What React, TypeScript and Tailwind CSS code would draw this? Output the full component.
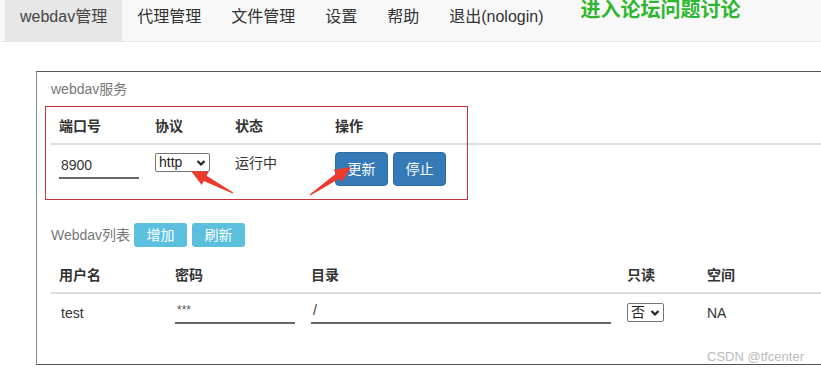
import React from 'react';

const font = "font-['Liberation_Sans','Noto_Sans_CJK_SC',sans-serif]";

// builds a tapered arrow polygon from tail to tip
function arrowPoints(x1: number, y1: number, x2: number, y2: number) {
  const dx = x2 - x1;
  const dy = y2 - y1;
  const len = Math.hypot(dx, dy);
  const ux = dx / len;
  const uy = dy / len;
  const nx = -uy;
  const ny = ux;
  const head = 16;
  const neckX = x2 - ux * head;
  const neckY = y2 - uy * head;
  const p = (x: number, y: number) => `${x.toFixed(1)},${y.toFixed(1)}`;
  return [
    p(x1 + nx * 0.6, y1 + ny * 0.6),
    p(neckX + nx * 3, neckY + ny * 3),
    p(neckX + nx * 7.5, neckY + ny * 7.5),
    p(x2, y2),
    p(neckX - nx * 7.5, neckY - ny * 7.5),
    p(neckX - nx * 3, neckY - ny * 3),
    p(x1 - nx * 0.6, y1 - ny * 0.6),
  ].join(' ');
}

function Chevron() {
  return (
    <svg width="10" height="8" viewBox="0 0 10 8" className="shrink-0">
      <path d="M1.5 2 L5 5.5 L8.5 2" fill="none" stroke="#222" strokeWidth="2.2" />
    </svg>
  );
}

function FakeSelect({ value, width }: { value: string; width: string }) {
  return (
    <div className={`${width} h-[19px] border border-[#767676] rounded-[2px] bg-white flex items-center justify-between pl-[3px] pr-[3px] text-[14px] leading-[17px] text-[#222]`}>
      <span>{value}</span>
      <Chevron />
    </div>
  );
}

function LineInput({ value, width, small }: { value: string; width: string; small?: boolean }) {
  return (
    <div className={`${width} h-[26px] border-b-2 border-[#666] flex items-center pl-[2px] ${small ? 'text-[12px] text-[#555]' : 'text-[14px] text-[#333]'}`}>
      {value}
    </div>
  );
}

export default function App() {
  const tabs = ['代理管理', '文件管理', '设置', '帮助', '退出(nologin)'];

  return (
    <div className={`w-[821px] h-[373px] overflow-hidden bg-white relative ${font}`}>
      {/* top nav */}
      <nav className="h-[42px] bg-[#f8f8f8] border-b border-[#e7e7e7] flex pl-[5px]">
        <div className="h-[41px] px-[15px] pt-[6px] text-[16px] leading-[22px] bg-[#e7e7e7] text-[#444]">webdav管理</div>
        {tabs.map((t) => (
          <div key={t} className="h-[41px] px-[15px] pt-[6px] text-[16px] leading-[22px] text-[#333]">{t}</div>
        ))}
        <div className="pl-[22px] -mt-[1px] text-[20px] leading-[22px] font-bold text-[#2fb62f]">进入论坛问题讨论</div>
      </nav>

      {/* panel */}
      <div className="relative mt-[29px] ml-[36px] w-[830px] h-[294px] border border-[#555] border-r-0 border-l-[#888]">
        <div className="h-[34px] pl-[14px] pt-[1px] flex items-center text-[14px] text-[#777]">webdav服务</div>

        {/* service table */}
        <div className="ml-[14px]">
          <div className="flex h-[39px] pt-[3px] items-center text-[14px] font-bold text-[#333] border-b-2 border-[#ddd]">
            <div className="w-[96px] pl-[8px]">端口号</div>
            <div className="w-[80px] pl-[8px]">协议</div>
            <div className="w-[100px] pl-[8px]">状态</div>
            <div className="pl-[8px]">操作</div>
          </div>
          <div className="flex h-[54px] text-[14px] text-[#333]">
            <div className="w-[96px] pl-[8px] pt-[8px]">
              <LineInput value="8900" width="w-[80px]" />
            </div>
            <div className="w-[80px] pl-[8px] pt-[8px]">
              <FakeSelect value="http" width="w-[55px]" />
            </div>
            <div className="w-[100px] pl-[8px] pt-[9px] leading-[18px]">运行中</div>
            <div className="pl-[8px] pt-[7px] flex gap-[5px]">
              <button className="w-[53px] h-[34px] rounded-[4px] bg-[#337ab7] border border-[#2e6da4] text-white text-[14px]">更新</button>
              <button className="w-[53px] h-[34px] rounded-[4px] bg-[#337ab7] border border-[#2e6da4] text-white text-[14px]">停止</button>
            </div>
          </div>
        </div>

        {/* list toolbar */}
        <div className="mt-[24px] pl-[14px] flex items-center gap-[5px] h-[24px]">
          <span className="text-[14px] text-[#777] mr-[-1px]">Webdav列表</span>
          <button className="w-[53px] h-[24px] rounded-[3px] bg-[#5bc0de] text-white text-[14px]">增加</button>
          <button className="w-[53px] h-[24px] rounded-[3px] bg-[#5bc0de] text-white text-[14px]">刷新</button>
        </div>

        {/* user table */}
        <div className="ml-[14px] mt-[8px]">
          <div className="flex h-[39px] pt-[3px] items-center text-[14px] font-bold text-[#333] border-b-2 border-[#ddd]">
            <div className="w-[116px] pl-[8px]">用户名</div>
            <div className="w-[136px] pl-[8px]">密码</div>
            <div className="w-[316px] pl-[8px]">目录</div>
            <div className="w-[80px] pl-[8px]">只读</div>
            <div className="pl-[8px]">空间</div>
          </div>
          <div className="flex h-[40px] text-[14px] text-[#333]">
            <div className="w-[116px] pl-[10px] pt-[10px] leading-[18px]">test</div>
            <div className="w-[136px] pl-[8px] pt-[4px]">
              <LineInput value="***" width="w-[120px]" small />
            </div>
            <div className="w-[316px] pl-[8px] pt-[4px]">
              <LineInput value="/" width="w-[300px]" />
            </div>
            <div className="w-[80px] pl-[8px] pt-[9px]">
              <FakeSelect value="否" width="w-[37px]" />
            </div>
            <div className="pl-[8px] pt-[10px] leading-[18px]">NA</div>
          </div>
        </div>

        {/* watermark */}
        <div className="absolute left-[670px] top-[277px] text-[13px] text-[#bbb] leading-[16px]">CSDN @tfcenter</div>

        {/* annotation box */}
        <div className="absolute left-[8px] top-[34px] w-[423px] h-[94px] border border-[#c8323c] pointer-events-none" />
      </div>

      {/* annotation arrows */}
      <svg className="absolute left-0 top-0 pointer-events-none" width="821" height="373">
        <polygon points={arrowPoints(233, 193, 191, 171)} fill="#ee3a2c" />
        <polygon points={arrowPoints(310, 195, 351, 167)} fill="#ee3a2c" />
      </svg>
    </div>
  );
}
